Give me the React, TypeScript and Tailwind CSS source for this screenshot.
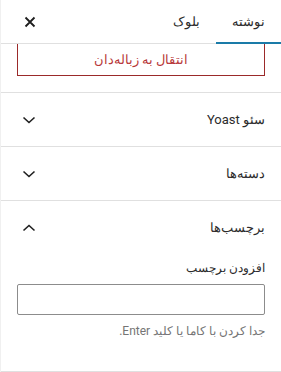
import React from 'react';

const Chevron: React.FC<{ up?: boolean }> = ({ up }) => (
  <svg width="24" height="24" viewBox="0 0 24 24" className="shrink-0">
    <path
      d={up ? 'M17.5 14.5 12 9.5l-5.5 5' : 'M6.5 9.5l5.5 5 5.5-5'}
      fill="none"
      stroke="#1e1e1e"
      strokeWidth="1.6"
    />
  </svg>
);

const PanelTitle: React.FC<{ title: string; open?: boolean }> = ({ title, open }) => (
  <button className="flex h-[53px] w-full items-center justify-between px-4 text-[13px] text-[#2c2c2c]">
    <span>{title}</span>
    <Chevron up={open} />
  </button>
);

export default function App() {
  return (
    <div
      dir="rtl"
      className="h-[372px] w-[281px] overflow-hidden border-l border-[#f0f0f0] bg-white"
      style={{ fontFamily: 'Roboto, "Noto Sans", sans-serif' }}
    >
      {/* Tabs */}
      <div className="flex h-[44px] items-stretch border-b border-[#e0e0e0]">
        <button className="relative px-4 text-[13px] text-[#2c2c2c]">
          نوشته
          <span className="absolute inset-x-0 -bottom-px h-[2px] bg-[#1a7ba8]" />
        </button>
        <button className="px-4 text-[13px] text-[#2c2c2c]">بلوک</button>
        <button className="mr-auto flex w-[58px] items-center justify-center">
          <svg width="12" height="12" viewBox="0 0 12 12">
            <path d="M1.5 1.5l9 9M10.5 1.5l-9 9" stroke="#1e1e1e" strokeWidth="1.8" />
          </svg>
        </button>
      </div>

      {/* Trash */}
      <div className="border-b border-[#e0e0e0] px-4 pb-4">
        <button className="flex h-[32px] w-full items-center justify-center border border-t-0 border-[#9b2a2a] text-[13px] text-[#b8393a]">
          انتقال به زباله‌دان
        </button>
      </div>

      <div className="border-b border-[#e0e0e0]">
        <PanelTitle title="سئو Yoast" />
      </div>
      <div className="border-b border-[#e0e0e0]">
        <PanelTitle title="دسته‌ها" />
      </div>
      <div className="border-b border-[#e0e0e0]">
        <PanelTitle title="برچسب‌ها" open />
        <div className="px-4 pb-[30px] pt-[4px]">
          <label className="block text-[12px] leading-[20px] text-[#2c2c2c]">افزودن برچسب</label>
          <input className="mt-[6px] block h-[31px] w-full rounded-[2px] border border-[#8c8c8c] bg-white px-2 text-[13px] outline-none" />
          <p className="mt-[6px] text-[12px] leading-[20px] text-[#757575]">جدا کردن با کاما یا کلید Enter.</p>
        </div>
      </div>
    </div>
  );
}
